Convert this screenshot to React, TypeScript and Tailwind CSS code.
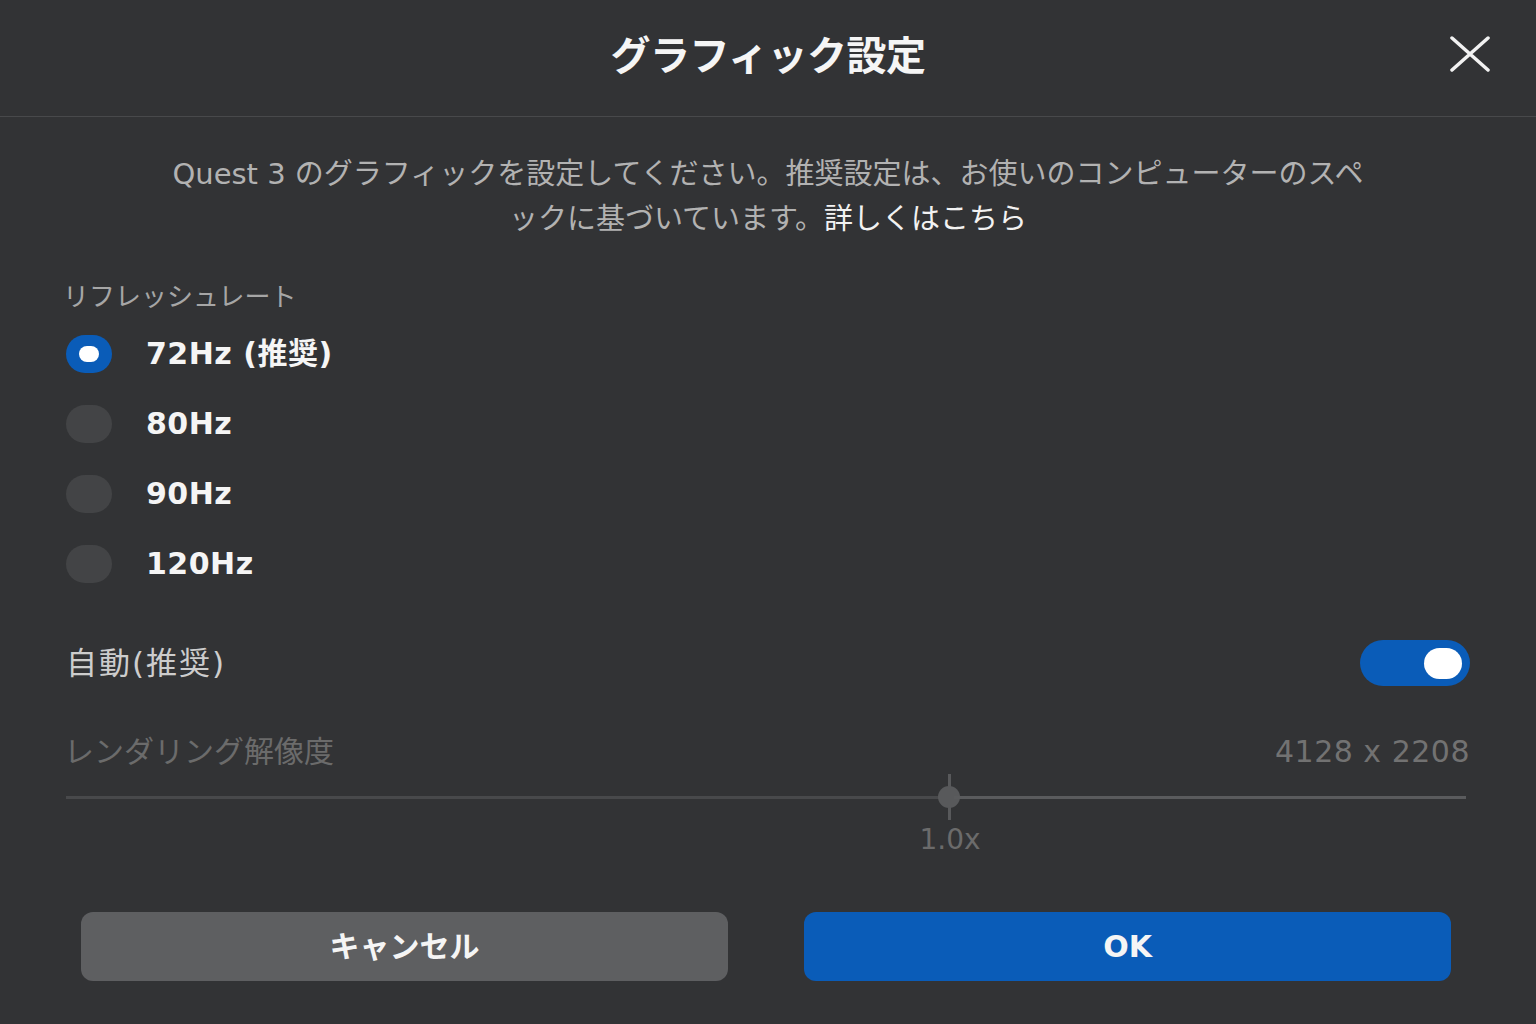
import { useState } from 'react';

const RATES = ['72Hz (推奨)', '80Hz', '90Hz', '120Hz'];

const FONT = { fontFamily: '"DejaVu Sans", "Noto Sans CJK JP", sans-serif' };

function Radio({ checked }: { checked: boolean }) {
  if (checked) {
    return (
      <span className="w-[46px] h-[38px] rounded-full bg-[#0a5cb8] flex items-center justify-center shrink-0">
        <span className="w-[20px] h-[16px] rounded-full bg-white" />
      </span>
    );
  }
  return <span className="w-[46px] h-[38px] rounded-full bg-[#434446] shrink-0" />;
}

export default function App() {
  const [rate, setRate] = useState(0);
  const [auto, setAuto] = useState(true);

  return (
    <div className="w-full h-[1024px] bg-[#323335] flex flex-col" style={FONT}>
      {/* header */}
      <div className="h-[117px] border-b border-[#48494b] grid grid-cols-[1fr_auto_1fr] items-center shrink-0">
        <div />
        <h1 className="text-[40px] font-bold text-[#f5f5f5] leading-none -mt-[4px] tracking-[-0.5px]">グラフィック設定</h1>
        <div className="flex justify-end pr-[46px]">
          <button className="w-[40px] h-[36px] flex items-center justify-center -mt-[8px]">
            <svg width="40" height="36" viewBox="0 0 40 36" fill="none">
              <path d="M2 2 L38 34 M38 2 L2 34" stroke="#f2f2f2" strokeWidth="3.5" strokeLinecap="round" />
            </svg>
          </button>
        </div>
      </div>

      {/* description */}
      <div className="pt-[35px] text-center text-[29px] leading-[45px] text-[#b2b2b2]">
        <div>Quest 3 のグラフィックを設定してください。推奨設定は、お使いのコンピューターのスペ</div>
        <div>
          ックに基づいています。<span className="text-[#f2f2f2]">詳しくはこちら</span>
        </div>
      </div>

      <div className="px-[66px] flex flex-col">
        <div className="mt-[35px] text-[26px] leading-[40px] text-[#a6a6a6] -ml-[3px]">リフレッシュレート</div>

        <div className="mt-[2px] flex flex-col">
          {RATES.map((r, i) => (
            <button key={r} onClick={() => setRate(i)} className="h-[70px] flex items-center gap-[34px] text-left">
              <Radio checked={rate === i} />
              <span className="text-[30px] font-bold text-[#f5f5f5] leading-none tracking-[0.5px]">{r}</span>
            </button>
          ))}
        </div>

        <div className="mt-[41px] h-[46px] flex items-center justify-between">
          <span className="text-[31px] text-[#cdcdcd] leading-none tracking-[2px]">自動(推奨)</span>
          <button
            onClick={() => setAuto(!auto)}
            className={`w-[110px] h-[46px] rounded-full flex items-center px-[8px] ${auto ? 'bg-[#0a5cb8] justify-end' : 'bg-[#434446] justify-start'}`}
          >
            <span className="w-[38px] h-[31px] rounded-full bg-white" />
          </button>
        </div>

        <div className="mt-[46px] h-[40px] flex items-center justify-between">
          <span className="text-[30px] text-[#6b6b6b] leading-none -ml-[2px]">レンダリング解像度</span>
          <span className="text-[30px] text-[#727272] leading-none tracking-[0.5px]">4128 x 2208</span>
        </div>

        {/* slider */}
        <div className="mt-[2px] h-[46px] flex items-center pr-[4px]">
          <div className="w-[888px] h-[3px] bg-[#48494b]" />
          <div className="w-0 h-[46px] flex items-center justify-center">
            <div className="w-[3px] h-[46px] bg-[#58595b] shrink-0" />
            <div className="w-[22px] h-[22px] rounded-full bg-[#58595b] shrink-0 -ml-[12.5px]" />
          </div>
          <div className="flex-1 h-[3px] bg-[#5a5b5d]" />
        </div>

        <div className="mt-[2px] flex">
          <div className="w-[884px] flex justify-end">
            <span className="translate-x-1/2 text-[28px] leading-[36px] text-[#6b6b6b]">1.0x</span>
          </div>
        </div>
      </div>

      {/* buttons */}
      <div className="mt-[54px] pl-[81px] pr-[85px] grid grid-cols-2 gap-[76px]">
        <button className="h-[69px] rounded-[12px] bg-[#5e5f61] text-[30px] font-bold text-[#f5f5f5]">キャンセル</button>
        <button className="h-[69px] rounded-[12px] bg-[#0a5cb8] text-[30px] font-bold text-[#f5f5f5]">OK</button>
      </div>
    </div>
  );
}
